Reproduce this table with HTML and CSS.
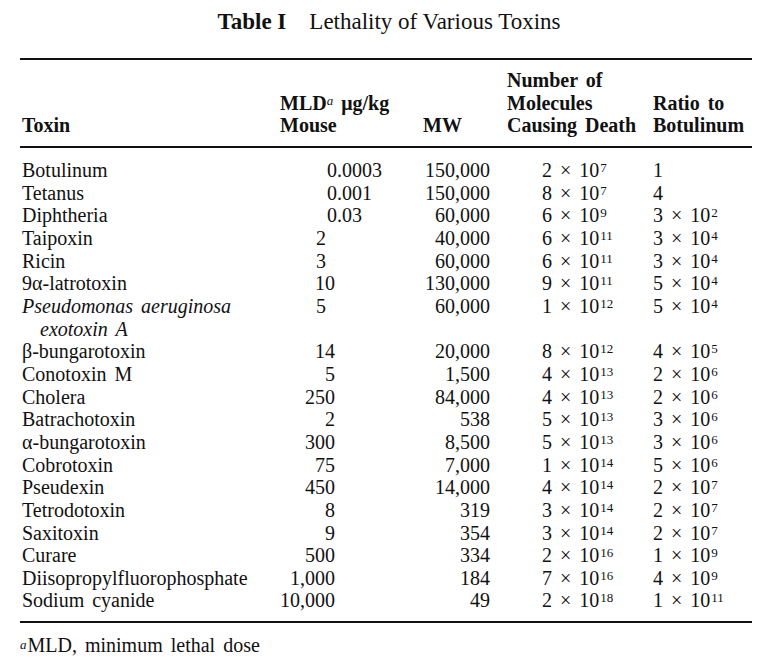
FILE: index.html
```html
<!DOCTYPE html>
<html lang="en">
<head>
<meta charset="utf-8">
<title>Table I Lethality of Various Toxins</title>
<link rel="stylesheet" href="styles.css">
</head>
<body>
<div class="page">
  <h1 class="title"><b class="title-num">Table I</b><span class="title-text">Lethality of Various Toxins</span></h1>
  <table class="toxins">
    <colgroup>
      <col class="c-name"><col class="c-mld"><col class="c-mw"><col class="c-mol"><col class="c-ratio">
    </colgroup>
    <thead>
      <tr>
        <th>Toxin</th>
        <th>MLD<sup class="fn">a</sup> μg/kg<br>Mouse</th>
        <th>MW</th>
        <th>Number of<br>Molecules<br>Causing Death</th>
        <th>Ratio to<br>Botulinum</th>
      </tr>
    </thead>
    <tbody>
      <tr><td class="name">Botulinum</td><td class="mld d">0.0003</td><td class="mw">150,000</td><td class="mol">2 × 10<sup class="exp">7</sup></td><td class="ratio">1</td></tr>
      <tr><td class="name">Tetanus</td><td class="mld d">0.001</td><td class="mw">150,000</td><td class="mol">8 × 10<sup class="exp">7</sup></td><td class="ratio">4</td></tr>
      <tr><td class="name">Diphtheria</td><td class="mld d">0.03</td><td class="mw">60,000</td><td class="mol">6 × 10<sup class="exp">9</sup></td><td class="ratio">3 × 10<sup class="exp">2</sup></td></tr>
      <tr><td class="name">Taipoxin</td><td class="mld s">2</td><td class="mw">40,000</td><td class="mol">6 × 10<sup class="exp">11</sup></td><td class="ratio">3 × 10<sup class="exp">4</sup></td></tr>
      <tr><td class="name">Ricin</td><td class="mld s">3</td><td class="mw">60,000</td><td class="mol">6 × 10<sup class="exp">11</sup></td><td class="ratio">3 × 10<sup class="exp">4</sup></td></tr>
      <tr><td class="name">9α-latrotoxin</td><td class="mld">10</td><td class="mw">130,000</td><td class="mol">9 × 10<sup class="exp">11</sup></td><td class="ratio">5 × 10<sup class="exp">4</sup></td></tr>
      <tr><td class="name hang"><i>Pseudomonas aeruginosa<br>exotoxin A</i></td><td class="mld s">5</td><td class="mw">60,000</td><td class="mol">1 × 10<sup class="exp">12</sup></td><td class="ratio">5 × 10<sup class="exp">4</sup></td></tr>
      <tr><td class="name">β-bungarotoxin</td><td class="mld">14</td><td class="mw">20,000</td><td class="mol">8 × 10<sup class="exp">12</sup></td><td class="ratio">4 × 10<sup class="exp">5</sup></td></tr>
      <tr><td class="name">Conotoxin M</td><td class="mld">5</td><td class="mw">1,500</td><td class="mol">4 × 10<sup class="exp">13</sup></td><td class="ratio">2 × 10<sup class="exp">6</sup></td></tr>
      <tr><td class="name">Cholera</td><td class="mld">250</td><td class="mw">84,000</td><td class="mol">4 × 10<sup class="exp">13</sup></td><td class="ratio">2 × 10<sup class="exp">6</sup></td></tr>
      <tr><td class="name">Batrachotoxin</td><td class="mld">2</td><td class="mw">538</td><td class="mol">5 × 10<sup class="exp">13</sup></td><td class="ratio">3 × 10<sup class="exp">6</sup></td></tr>
      <tr><td class="name">α-bungarotoxin</td><td class="mld">300</td><td class="mw">8,500</td><td class="mol">5 × 10<sup class="exp">13</sup></td><td class="ratio">3 × 10<sup class="exp">6</sup></td></tr>
      <tr><td class="name">Cobrotoxin</td><td class="mld">75</td><td class="mw">7,000</td><td class="mol">1 × 10<sup class="exp">14</sup></td><td class="ratio">5 × 10<sup class="exp">6</sup></td></tr>
      <tr><td class="name">Pseudexin</td><td class="mld">450</td><td class="mw">14,000</td><td class="mol">4 × 10<sup class="exp">14</sup></td><td class="ratio">2 × 10<sup class="exp">7</sup></td></tr>
      <tr><td class="name">Tetrodotoxin</td><td class="mld">8</td><td class="mw">319</td><td class="mol">3 × 10<sup class="exp">14</sup></td><td class="ratio">2 × 10<sup class="exp">7</sup></td></tr>
      <tr><td class="name">Saxitoxin</td><td class="mld">9</td><td class="mw">354</td><td class="mol">3 × 10<sup class="exp">14</sup></td><td class="ratio">2 × 10<sup class="exp">7</sup></td></tr>
      <tr><td class="name">Curare</td><td class="mld">500</td><td class="mw">334</td><td class="mol">2 × 10<sup class="exp">16</sup></td><td class="ratio">1 × 10<sup class="exp">9</sup></td></tr>
      <tr><td class="name">Diisopropylfluorophosphate</td><td class="mld">1,000</td><td class="mw">184</td><td class="mol">7 × 10<sup class="exp">16</sup></td><td class="ratio">4 × 10<sup class="exp">9</sup></td></tr>
      <tr><td class="name">Sodium cyanide</td><td class="mld">10,000</td><td class="mw">49</td><td class="mol">2 × 10<sup class="exp">18</sup></td><td class="ratio">1 × 10<sup class="exp">11</sup></td></tr>
    </tbody>
  </table>
  <p class="note"><sup class="fn-note">a</sup>MLD, minimum lethal dose</p>
</div>
</body>
</html>
```
FILE: styles.css
```css
html, body {
  margin: 0;
  padding: 0;
  background: #ffffff;
}

body {
  font-family: "Liberation Serif", "Times New Roman", serif;
  color: #111111;
}

.page {
  padding: 9px 0 0 20px;
  width: 732px;
}

.title {
  margin: 0 0 23px 0;
  font-size: 23px;
  line-height: 26px;
  font-weight: normal;
  text-align: center;
  padding-left: 6px;
}

.title-num {
  font-weight: bold;
  margin-right: 23px;
}

.toxins {
  width: 732px;
  table-layout: fixed;
  border-collapse: collapse;
  font-size: 20px;
  word-spacing: 3px;
}

.c-name { width: 260px; }
.c-mld { width: 143px; }
.c-mw { width: 84px; }
.c-mol { width: 146px; }
.c-ratio { width: 99px; }

.toxins th,
.toxins td {
  padding: 0;
  white-space: nowrap;
}

.toxins thead tr {
  border-top: 2px solid #111111;
  border-bottom: 2px solid #111111;
}

.toxins th {
  font-weight: bold;
  text-align: left;
  vertical-align: bottom;
  line-height: 22.5px;
  padding-top: 9px;
  padding-bottom: 9.5px;
}

.toxins th:first-child {
  padding-left: 2px;
}

.toxins td {
  line-height: 22.65px;
  vertical-align: top;
}

.toxins tbody tr:first-child td {
  padding-top: 11px;
}

.toxins tbody tr:last-child {
  border-bottom: 2px solid #111111;
}

.toxins tbody tr:last-child td {
  padding-bottom: 9px;
}

.toxins td.name {
  padding-left: 2px;
}

.toxins td.name.hang {
  white-space: normal;
}

.name.hang i {
  display: block;
  padding-left: 18px;
  text-indent: -18px;
}

.toxins td.mld {
  text-align: right;
  padding-right: 88px;
}

.toxins td.mld.d {
  text-align: left;
  padding-left: 47px;
  padding-right: 0;
}

.toxins td.mld.s {
  text-align: left;
  padding-left: 36px;
  padding-right: 0;
}

.toxins td.mw {
  text-align: right;
  padding-right: 17px;
}

.toxins td.mol {
  padding-left: 35px;
}

.exp {
  font-size: 13px;
  line-height: 0;
  vertical-align: 5px;
  margin-left: 1px;
}

.fn {
  font-size: 13px;
  font-style: italic;
  font-weight: normal;
  line-height: 0;
  vertical-align: 5px;
}

.note {
  margin: 11px 0 0 0;
  font-size: 20px;
  line-height: 22.65px;
  word-spacing: 3px;
}

.fn-note {
  font-size: 13px;
  font-style: italic;
  line-height: 0;
  vertical-align: 3px;
  margin-right: 1px;
}
```
